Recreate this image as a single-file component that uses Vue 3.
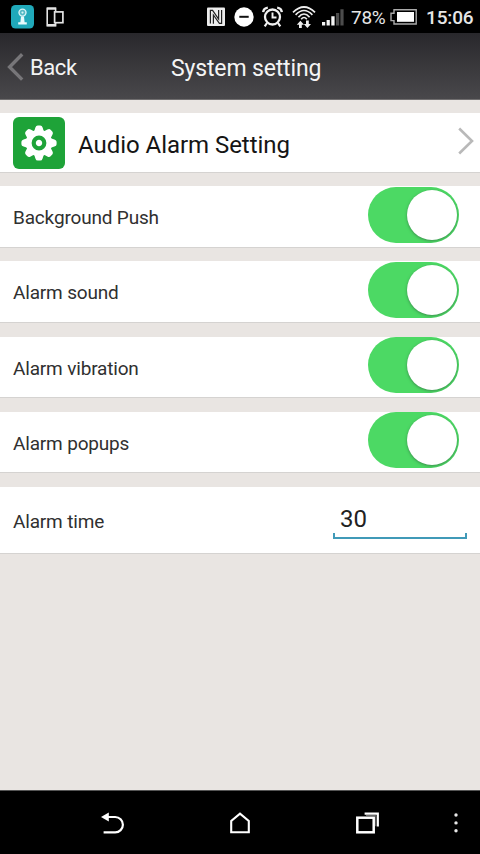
<script setup>
import { ref } from 'vue'

const toggles = ref([
  { label: 'Background Push', on: true, cls: 'push' },
  { label: 'Alarm sound', on: true, cls: 'sound' },
  { label: 'Alarm vibration', on: true, cls: 'vibration' },
  { label: 'Alarm popups', on: true, cls: 'popups' },
])
const alarmTime = ref('30')
const teeth = [0, 45, 90, 135, 180, 225, 270, 315]
</script>

<template>
  <div class="screen">
    <div class="status">
      <svg class="cam" width="23" height="24" viewBox="0 0 23 24">
        <rect x="0" y="0" width="23" height="23.5" rx="4.5" fill="#20a9ba" />
        <circle cx="11.5" cy="7.6" r="3.5" fill="#55b9c5" stroke="#d9f4f7" stroke-width="1.4" />
        <circle cx="11.5" cy="7.6" r="1.1" fill="#d7f3f6" />
        <path d="M10 11.5h3l.6 5.7h2.2v2.4H7.2v-2.4h2.2z" fill="#e8fbfd" />
      </svg>
      <svg class="device" width="18" height="20" viewBox="0 0 18 20" fill="none" stroke="#e4e4e4">
        <path d="M9.6 4.4V1.2H1.2v17.6h8.4v-3" stroke-width="1.6" />
        <path d="M1 1.6h9M1 18.2h9" stroke-width="2.2" />
        <rect x="8.6" y="4.9" width="8.3" height="10.8" stroke-width="1.7" />
      </svg>
      <svg class="nfc" width="18" height="20" viewBox="0 0 18 20">
        <rect x="0" y="0.5" width="18" height="18.5" rx="1" fill="#ededed" />
        <path d="M3.4 16.6V3.4h2.2l6 8.6V3" fill="none" stroke="#222" stroke-width="1.2" />
        <path d="M6.4 16.8V8l6 8.4h2.2V3" fill="none" stroke="#222" stroke-width="1.2" />
      </svg>
      <svg class="dnd" width="20" height="20" viewBox="0 0 20 20">
        <circle cx="10" cy="10" r="9.7" fill="#fff" />
        <path d="M5.3 9.8h9.4" stroke="#111" stroke-width="2" />
      </svg>
      <svg class="alarm" width="21" height="22" viewBox="0 0 21 22" fill="none" stroke="#f0f0f0">
        <circle cx="10.5" cy="11" r="7.5" stroke-width="2.3" />
        <path d="M10.5 6.5V11.5h4" stroke-width="1.9" />
        <path d="M1.2 6.2Q1.5 2.2 5.8 1.6M19.8 6.2Q19.5 2.2 15.2 1.6" stroke-width="2.4" />
        <path d="M5 17l-2.3 3.4M16 17l2.3 3.4" stroke-width="2.2" />
      </svg>
      <svg class="wifi" width="24" height="24" viewBox="0 0 24 24" fill="none" stroke="#eee">
        <path d="M1 7.4Q12 -3.4 23 7.4M3.6 9.8Q12 1.2 20.4 9.8M6.4 12.2Q12 5.8 17.6 12.2" stroke-width="1.7" />
        <path d="M9.2 14.2Q12 10.8 14.8 14.2" stroke-width="1.7" />
        <path d="M8.4 23v-4M15.4 15.6v4" stroke-width="2.8" />
        <path d="M4.8 19.8l3.6-4 3.6 4zM11.8 19h7.2l-3.6 4z" fill="#eee" stroke="none" />
      </svg>
      <svg class="signal" width="22" height="18" viewBox="0 0 22 18">
        <path d="M0 14h3.2v3.5H0zM4.6 12h3.2v5.5H4.6zM9.3 8.2h3.3v9.3H9.3z" fill="#f4f4f4" />
        <path d="M14 5h3.2v12.5H14zM18.4 1.2h3.2v16.3h-3.2z" fill="#4c4c4c" />
      </svg>
      <span class="percent">78%</span>
      <svg class="battery" width="27" height="16" viewBox="0 0 27 16">
        <path d="M4 .8h22.2v14.2H4v-3.4H1V4.2h3z" fill="none" stroke="#aaa" stroke-width="1.4" />
        <rect x="7" y="3" width="17" height="9.8" fill="#fff" />
      </svg>
      <span class="clock">15:06</span>
    </div>

    <header class="header">
      <button class="back">
        <svg width="17" height="28" viewBox="0 0 17 28" fill="none" stroke="#777679" stroke-width="3.4">
          <path d="M15.2 1.2L2.6 14l12.6 12.6" />
        </svg>
        <span>Back</span>
      </button>
      <h1>System setting</h1>
    </header>

    <main class="content">
      <section class="row audio">
        <svg class="gear" width="52" height="52" viewBox="0 0 52 52">
          <rect width="52" height="52" rx="6" fill="#1ea338" />
          <g transform="translate(26 26)">
            <circle r="13.2" fill="#fff" />
            <path v-for="a in teeth" :key="a" d="M-5 -11L-3.6 -15.4Q-3 -17.6 -1.2 -17.6H1.2Q3 -17.6 3.6 -15.4L5 -11z" fill="#fff" :transform="`rotate(${a})`" />
            <circle r="5.3" fill="#fff" stroke="#1ea338" stroke-width="4.2" />
          </g>
        </svg>
        <span class="audio-label">Audio Alarm Setting</span>
        <svg class="chevron" width="16" height="28" viewBox="0 0 16 28" fill="none" stroke="#b9b9b9" stroke-width="2.6">
          <path d="M1.2 1.5L14 14 1.2 26.5" />
        </svg>
      </section>

      <section v-for="t in toggles" :key="t.label" class="row toggle-row" :class="t.cls">
        <span class="label">{{ t.label }}</span>
        <button class="switch" :class="{ on: t.on }" role="switch" :aria-checked="t.on" @click="t.on = !t.on">
          <i class="knob"></i>
        </button>
      </section>

      <section class="row time">
        <span class="label">Alarm time</span>
        <label class="field">
          <input v-model="alarmTime" type="text" />
        </label>
      </section>
    </main>

    <nav class="nav">
      <svg class="nav-back" width="24" height="22" viewBox="0 0 24 22">
        <path d="M6 5h8.2a7.7 7.7 0 0 1 0 15.4H2.6" fill="none" stroke="#fff" stroke-width="2.2" />
        <path d="M0 5l7.8-4.4v8.8z" fill="#fff" />
      </svg>
      <svg class="nav-home" width="20" height="22" viewBox="0 0 20 22">
        <path d="M1.2 20.2V9L10 1.6 18.8 9v11.2z" fill="none" stroke="#fff" stroke-width="2.1" />
      </svg>
      <svg class="nav-recent" width="24" height="22" viewBox="0 0 24 22" fill="none" stroke="#fff">
        <rect x="1.3" y="5.7" width="16.4" height="14.6" stroke-width="2.5" />
        <path d="M8.6 1.6h13.2v12.8" stroke-width="2.2" />
        <path d="M10 3.6h9.8v10.6" stroke="#777" stroke-width="1" />
      </svg>
      <svg class="nav-more" width="4" height="20" viewBox="0 0 4 20" fill="#e8e8e8">
        <circle cx="2" cy="2" r="1.7" />
        <circle cx="2" cy="9.9" r="1.7" />
        <circle cx="2" cy="17.7" r="1.7" />
      </svg>
    </nav>
  </div>
</template>

<style>
body {
  margin: 0;
  background: #000;
}
</style>

<style scoped>
.screen {
  width: 480px;
  height: 854px;
  display: flex;
  flex-direction: column;
  overflow: hidden;
  background: #e9e5e2;
  font-family: Roboto, "Liberation Sans", sans-serif;
}
svg {
  display: block;
  flex: none;
}
button {
  padding: 0;
  border: 0;
  background: none;
  font: inherit;
  color: inherit;
}
.status {
  height: 33px;
  flex: none;
  display: flex;
  align-items: center;
  background: #000;
  color: #e6e6e6;
}
.cam { margin-left: 11px; }
.device { margin-left: 12px; }
.nfc { margin-left: 143px; }
.dnd { margin-left: 9px; }
.alarm { margin-left: 8px; }
.wifi { margin-left: 9px; }
.signal { margin-left: 6px; }
.percent {
  width: 40px;
  margin: 2px 0 0 7px;
  font-size: 19px;
  line-height: 24px;
  letter-spacing: -0.3px;
}
.battery { margin-left: -1px; }
.clock {
  margin: 2px 0 0 9px;
  font-size: 19px;
  line-height: 24px;
  font-weight: 500;
  letter-spacing: -0.15px;
}
.header {
  height: 67px;
  box-sizing: border-box;
  flex: none;
  display: grid;
  grid-template-columns: 171px 1fr;
  align-items: center;
  background: linear-gradient(#29282c, #49484b);
  border-bottom: 1px solid #706e6f;
  color: #f4f4f4;
}
.back {
  display: flex;
  align-items: center;
  gap: 6px;
  padding-left: 7px;
  padding-top: 1px;
  font-size: 22px;
  line-height: 28px;
  letter-spacing: -0.4px;
}
.back span {
  padding-top: 2px;
}
h1 {
  margin: 5px 0 0;
  font-size: 23px;
  line-height: 28px;
  font-weight: 400;
  letter-spacing: -0.15px;
}
.content {
  flex: 1;
  padding-top: 13px;
}
.row {
  display: flex;
  align-items: center;
  box-sizing: border-box;
  margin-bottom: 13px;
  padding-left: 13px;
  background: #fff;
  border-bottom: 1px solid #d5d3d1;
}
.audio {
  height: 60px;
}
.audio-label {
  margin: 4px 0 0 13px;
  font-size: 24px;
  line-height: 30px;
  letter-spacing: -0.04px;
  color: #151515;
}
.chevron {
  margin: -3px 6px 0 auto;
}
.toggle-row {
  height: 62px;
  justify-content: space-between;
  padding-right: 21px;
}
.sound,
.vibration { margin-bottom: 14px; }
.vibration, .popups { height: 61px; }
.popups { margin-bottom: 14px; }
.label {
  margin-top: 3px;
  font-size: 19px;
  line-height: 24px;
  letter-spacing: -0.17px;
  color: #303030;
}
.vibration .label,
.popups .label { margin-top: 4px; }
.switch {
  width: 91px;
  height: 56px;
  margin-top: -3px;
  display: flex;
  align-items: center;
  border-radius: 28px;
  background: #ccc;
  overflow: hidden;
}
.vibration .switch,
.popups .switch { margin-top: -4px; }
.switch.on {
  justify-content: flex-end;
  background: #4cd964;
}
.knob {
  width: 50px;
  height: 50px;
  margin: 0 2px;
  border-radius: 50%;
  background: #fff;
  box-shadow: 0 1px 3px 0 rgba(45, 80, 60, 0.55);
}
.time {
  height: 67px;
  justify-content: space-between;
  padding-right: 13px;
}
.field {
  width: 134px;
  height: 40px;
  box-sizing: border-box;
  margin-top: -2px;
  display: flex;
  flex-direction: column;
  border-bottom: 2px solid #409ab8;
}
.field::after {
  content: "";
  height: 4px;
  flex: none;
  border: solid #409ab8;
  border-width: 0 2px;
}
input {
  flex: 1;
  min-height: 0;
  width: 100%;
  box-sizing: border-box;
  padding: 6px 0 0 7px;
  border: 0;
  outline: 0;
  background: none;
  color: #222;
  font: 24px Roboto, "Liberation Sans", sans-serif;
}
.nav {
  height: 64px;
  box-sizing: border-box;
  flex: none;
  display: flex;
  align-items: center;
  background: #000;
  border-top: 1px solid #555;
}
.nav-back { margin-left: 101px; }
.nav-home { margin-left: 105px; }
.nav-recent { margin-left: 106px; }
.nav-more { margin-left: 74px; }
</style>
